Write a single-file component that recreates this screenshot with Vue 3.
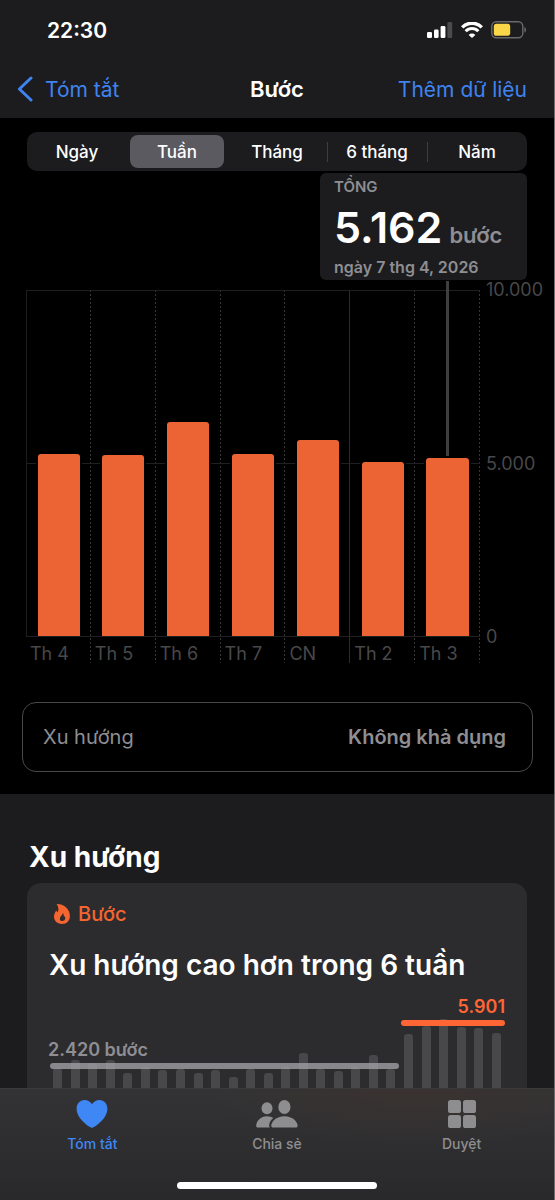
<script setup>
import { ref, computed } from 'vue'

const periods = ['Ngày', 'Tuần', 'Tháng', '6 tháng', 'Năm']
const period = ref('Tuần')

const days = [
  { label: 'Th 4', steps: 5270 },
  { label: 'Th 5', steps: 5245 },
  { label: 'Th 6', steps: 6190 },
  { label: 'Th 7', steps: 5290 },
  { label: 'CN', steps: 5680, weekEnd: true },
  { label: 'Th 2', steps: 5040 },
  { label: 'Th 3', steps: 5162 }
]
const maxSteps = 10000
const selected = ref(6)

const total = computed(() => formatSteps(days[selected.value].steps))

// weekly bars of the trend card, in px
const before = [62, 70, 67, 70, 57, 63, 60, 61, 57, 60, 53, 61, 57, 63, 77, 61, 59, 63, 75, 61]
const after = [96, 104, 111, 103, 102, 97]

const tab = ref('summary')

function formatSteps(n) {
  return n.toString().replace(/\B(?=(\d{3})+$)/g, '.')
}

function percent(steps) {
  return `${(steps / maxSteps) * 100}%`
}
</script>

<template>
  <div class="screen">
    <header class="top">
      <div class="status">
        <time>22:30</time>
        <div class="status-icons">
          <svg width="26" height="16" viewBox="0 0 26 16">
            <rect x="0" y="10" width="5" height="6" rx="1.3" fill="#fff" />
            <rect x="7" y="7.5" width="4.6" height="8.5" rx="1.3" fill="#fff" />
            <rect x="13.6" y="4" width="4.8" height="12" rx="1.3" fill="#fff" />
            <rect x="20.4" y="0" width="4.8" height="16" rx="1.3" fill="#4b4b4d" />
          </svg>
          <svg width="22" height="16" viewBox="0 0 22 16" fill="none" stroke="#fff">
            <path d="M1.2 5.4 A13.6 13.6 0 0 1 20.8 5.4" stroke-width="3.4" />
            <path d="M4.7 9.3 A8.6 8.6 0 0 1 17.3 9.3" stroke-width="3.1" />
            <path d="M11 16 L7.7 12.9 A4.6 4.6 0 0 1 14.3 12.9 Z" fill="#fff" stroke="none" />
          </svg>
          <svg width="36" height="18" viewBox="0 0 36 18">
            <rect x="0.8" y="0.8" width="31" height="16" rx="4.5" fill="none" stroke="#69696c" stroke-width="1.4" />
            <rect x="2.8" y="2.8" width="16.4" height="12" rx="2.6" fill="#f9d749" />
            <path d="M33.4 6 C35.6 6.8 35.6 10.8 33.4 11.6 Z" fill="#69696c" />
          </svg>
        </div>
      </div>
      <nav class="nav">
        <a href="#" class="back">
          <svg width="16" height="26" viewBox="0 0 16 26">
            <path d="M14 2 L2.4 13 L14 24" fill="none" stroke="currentColor" stroke-width="3" stroke-linecap="round" stroke-linejoin="round" />
          </svg>
          Tóm tắt
        </a>
        <h1>Bước</h1>
        <a href="#" class="add">Thêm dữ liệu</a>
      </nav>
    </header>

    <main>
      <section class="steps">
        <div class="segments">
          <button
            v-for="p in periods"
            :key="p"
            type="button"
            :class="{ active: p === period }"
            @click="period = p"
          >
            <span>{{ p }}</span>
          </button>
        </div>

        <div class="callout">
          <div class="callout-label">TỔNG</div>
          <div class="callout-value">
            <strong>{{ total }}</strong>
            <span>bước</span>
          </div>
          <div class="callout-date">ngày 7 thg 4, 2026</div>
        </div>

        <div class="chart">
          <div class="days">
            <div
              v-for="(day, i) in days"
              :key="day.label"
              class="day"
              :class="{ solid: day.weekEnd }"
              @click="selected = i"
            >
              <div class="plot">
                <div class="bar" :style="{ height: percent(day.steps) }"></div>
                <div v-if="i === selected" class="marker" :style="{ bottom: percent(day.steps) }"></div>
              </div>
              <div class="day-label">{{ day.label }}</div>
            </div>
          </div>
          <div class="axis">
            <span>10.000</span>
            <span>5.000</span>
            <span>0</span>
          </div>
        </div>

        <button type="button" class="trend-row">
          <span>Xu hướng</span>
          <b>Không khả dụng</b>
        </button>
      </section>

      <section class="trends">
        <h2>Xu hướng</h2>
        <article class="card">
          <div class="card-kind">
            <svg width="18" height="22" viewBox="0 0 18 22">
              <path
                fill-rule="evenodd"
                fill="currentColor"
                d="M3.6 1 C8.8 .6 14 3.6 16 8.6 C18.6 15 15.4 21 9 21 C3.6 21 .8 17.4 1 13.2 C1.1 10.8 2.2 9.2 3.2 7.4 C3.6 8.2 4 8.7 4.8 9.2 C5.8 6.6 5.6 3.4 3.6 1 Z M9.6 10 C10 11.6 8.8 12.4 7.9 13.3 C6 15.3 6.9 18 9.2 18 C11.9 18 13.1 15.4 11.6 13.1 C11.4 13.7 11.2 13.9 10.7 14.1 C11.1 12.4 10.8 10.9 9.6 10 Z"
              />
            </svg>
            Bước
          </div>
          <h3>Xu hướng cao hơn trong 6 tuần</h3>
          <div class="weeks">
            <div class="group before">
              <i v-for="(h, i) in before" :key="i" :style="{ height: h + 'px' }"></i>
              <div class="average"><span>2.420 bước</span></div>
            </div>
            <div class="group after">
              <i v-for="(h, i) in after" :key="i" :style="{ height: h + 'px' }"></i>
              <div class="average"><span>5.901</span></div>
            </div>
          </div>
        </article>
      </section>
    </main>

    <footer class="tabbar">
      <div class="tabs">
        <button type="button" :class="{ active: tab === 'summary' }" @click="tab = 'summary'">
          <svg width="32" height="28" viewBox="0 0 32 28">
            <path
              fill="currentColor"
              d="M16 28 C14.8 28 .6 19.4 .6 8.8 C.6 3.8 4 0 8.6 0 C11.8 0 14.4 1.6 16 4.3 C17.6 1.6 20.2 0 23.4 0 C28 0 31.4 3.8 31.4 8.8 C31.4 19.4 17.2 28 16 28 Z"
            />
          </svg>
          <span>Tóm tắt</span>
        </button>
        <button type="button" :class="{ active: tab === 'share' }" @click="tab = 'share'">
          <svg width="42" height="28" viewBox="0 0 42 28" fill="currentColor">
            <ellipse cx="11" cy="8.2" rx="5.5" ry="6" />
            <path d="M1.8 27.6 C.6 27.6 .2 26.8 .2 25.8 C.2 21 4.8 16.2 11 16.2 C13.6 16.2 15.6 16.9 17.2 18 C14.6 20 13.2 22.8 13.2 25.4 C13.2 26.2 13.4 27 13.8 27.6 Z" />
            <ellipse cx="28.4" cy="7" rx="6.1" ry="6.9" />
            <path d="M17.4 27.6 C15.8 27.6 15.2 26.9 15.2 25.8 C15.2 21.8 20.2 16.2 28.4 16.2 C36.6 16.2 41.6 21.8 41.6 25.8 C41.6 26.9 41 27.6 39.4 27.6 Z" />
          </svg>
          <span>Chia sẻ</span>
        </button>
        <button type="button" :class="{ active: tab === 'browse' }" @click="tab = 'browse'">
          <svg width="30" height="28" viewBox="0 0 30 28" fill="currentColor">
            <rect x="1" y="0" width="13" height="13" rx="2.6" />
            <rect x="16" y="0" width="13" height="13" rx="2.6" />
            <rect x="1" y="15" width="13" height="13" rx="2.6" />
            <rect x="16" y="15" width="13" height="13" rx="2.6" />
          </svg>
          <span>Duyệt</span>
        </button>
      </div>
      <div class="home"></div>
    </footer>
  </div>
</template>

<style>
body {
  margin: 0;
  background: #1c1c1e;
}
</style>

<style scoped>
* {
  box-sizing: border-box;
}

.screen {
  display: flex;
  flex-direction: column;
  height: 100vh;
  border-right: 1px solid #6c6c6e;
  background: #1c1c1e;
  color: #fff;
  font-family: Inter, 'Liberation Sans', sans-serif;
}

button {
  margin: 0;
  padding: 0;
  border: 0;
  background: none;
  color: inherit;
  font-family: inherit;
}

h1,
h2,
h3 {
  margin: 0;
}

.status {
  display: flex;
  justify-content: space-between;
  align-items: center;
  height: 60px;
  padding: 0 27px 0 47px;
  font-size: 21px;
  font-weight: 600;
}

.status-icons {
  display: flex;
  align-items: center;
  gap: 8px;
}

.nav {
  display: grid;
  grid-template-columns: 1fr auto 1fr;
  align-items: center;
  height: 58px;
  padding: 0 17px;
  font-size: 21px;
}

.nav a {
  color: #3f83f0;
  text-decoration: none;
}

.nav h1 {
  font-size: 22px;
  font-weight: 600;
}

.back {
  display: flex;
  align-items: center;
  gap: 12px;
}

.add {
  padding-right: 10px;
  text-align: right;
}

main {
  flex: 1;
  min-height: 0;
  overflow: hidden;
}

.steps {
  padding: 14px 0 22px;
  background: #000;
}

.segments {
  display: grid;
  grid-template-columns: repeat(5, 1fr);
  height: 39px;
  margin: 0 27px;
  border-radius: 10px;
  background: #1c1c1f;
}

.segments button {
  position: relative;
  padding: 3px;
  font-size: 17px;
  font-weight: 500;
}

.segments span {
  display: flex;
  justify-content: center;
  align-items: center;
  height: 100%;
  border-radius: 8px;
}

.segments .active span {
  background: #5b5a60;
}

.segments button:nth-child(n + 4)::before {
  content: '';
  position: absolute;
  left: 0;
  top: 10px;
  bottom: 9px;
  width: 1px;
  background: #3d3d41;
}

.callout {
  width: 207px;
  height: 107px;
  margin: 2px 27px 10px auto;
  padding: 5px 14px 0;
  border-radius: 6px;
  background: #1c1c1e;
  color: #8e8e93;
  font-weight: 600;
}

.callout-label {
  font-size: 15px;
  line-height: 18px;
}

.callout-value {
  display: flex;
  align-items: baseline;
  gap: 7px;
  margin-top: 5px;
  font-size: 22px;
  line-height: 24px;
}

.callout-value strong {
  color: #fff;
  font-size: 43px;
  font-weight: 600;
  line-height: 52px;
}

.callout-date {
  margin-top: 4px;
  font-size: 16px;
  line-height: 20px;
}

.chart {
  display: flex;
  padding-left: 26px;
}

.days {
  display: grid;
  grid-template-columns: repeat(7, 1fr);
  flex: 1;
}

.day {
  background: repeating-linear-gradient(#363638 0 2px, transparent 2px 4px) right / 1px 100% no-repeat;
}

.day.solid {
  background: linear-gradient(#2c2c2e, #2c2c2e) right / 1px 100% no-repeat;
}

.plot {
  position: relative;
  display: flex;
  justify-content: center;
  align-items: flex-end;
  height: 347px;
  border-top: 1px solid #202022;
  border-bottom: 1px solid #202022;
  background: linear-gradient(#202022, #202022) center / 100% 1px no-repeat;
}

.day:first-child .plot {
  border-left: 1px solid #1c1c1e;
}

.bar {
  width: 65%;
  border-radius: 3px 3px 0 0;
  background: #ec6433;
  box-shadow: -2px 0 #000, 2px 0 #000;
}

.marker {
  position: absolute;
  top: -10px;
  left: 50%;
  width: 3px;
  margin: 0 0 2px -2px;
  background: #3f3f42;
}

.day-label {
  padding: 8px 0 0 4px;
  color: #48484a;
  font-size: 18px;
  line-height: 18px;
}

.axis {
  display: flex;
  flex-direction: column;
  justify-content: space-between;
  width: 74px;
  height: 367px;
  margin-top: -10px;
  padding-left: 6px;
  color: #48484a;
  font-size: 18px;
  line-height: 20px;
}

.trend-row {
  display: flex;
  justify-content: space-between;
  align-items: center;
  width: calc(100% - 43px);
  height: 70px;
  margin: 39px 21px 0 22px;
  padding: 0 26px 0 20px;
  border: 1px solid #48484a;
  border-radius: 14px;
  color: #8e8e93;
  font-size: 20px;
}

.trend-row b {
  font-weight: 600;
}

.trends {
  padding: 45px 27px 0;
}

.trends h2 {
  padding-left: 2px;
  font-size: 28px;
  font-weight: 700;
  line-height: 36px;
}

.card {
  margin-top: 8px;
  padding: 18px 22px;
  border-radius: 14px;
  background: #2c2c2e;
}

.card-kind {
  display: flex;
  align-items: center;
  gap: 7px;
  padding-left: 4px;
  color: #f4652f;
  font-size: 20px;
  font-weight: 500;
  line-height: 26px;
}

.card h3 {
  margin-top: 20px;
  font-size: 28px;
  font-weight: 600;
  line-height: 36px;
  white-space: nowrap;
}

.weeks {
  display: grid;
  grid-template-columns: 20fr 6fr;
  height: 147px;
}

.group {
  position: relative;
  display: flex;
  justify-content: space-around;
  align-items: flex-end;
}

.group i {
  width: 9px;
  border-radius: 3px 3px 0 0;
  background: #48484a;
}

.average {
  position: absolute;
  left: 1px;
  right: 1px;
  height: 6px;
  border-radius: 3px;
  font-size: 18px;
  font-weight: 600;
  line-height: 20px;
}

.average span {
  position: absolute;
  bottom: 9px;
}

.before .average {
  bottom: 61px;
  background: #9f9fa4cc;
  color: #8e8e93;
}

.after .average {
  right: 0;
  bottom: 104px;
  background: #ff6535;
  color: #ff6535;
}

.before .average span {
  left: -2px;
}

.after .average span {
  right: 0;
}

.tabbar {
  position: relative;
  height: 112px;
  border-top: 1px solid #3a3a3c;
  background: radial-gradient(ellipse at 75% 0, #3a3230 0, transparent 35%), linear-gradient(#333335, #29292b);
}

.tabs {
  display: grid;
  grid-template-columns: repeat(3, 1fr);
}

.tabs button {
  display: flex;
  flex-direction: column;
  align-items: center;
  gap: 6px;
  padding-top: 11px;
  color: #8e8e90;
  font-size: 14px;
  font-weight: 500;
  line-height: 20px;
}

.tabs .active {
  color: #3f87f5;
}

.home {
  width: 36%;
  height: 7px;
  margin: 28px auto 0;
  border-radius: 4px;
  background: #fff;
}
</style>
